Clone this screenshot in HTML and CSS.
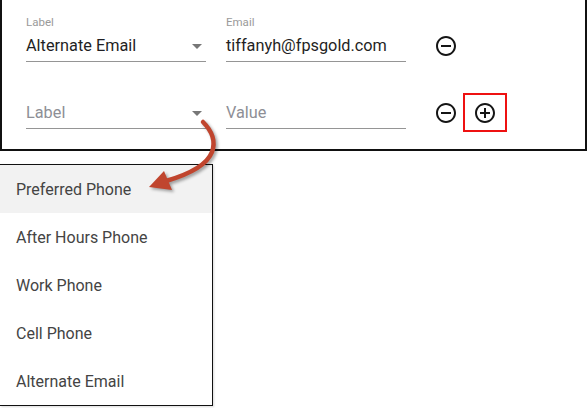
FILE: index.html
```html
<!DOCTYPE html>
<html>
<head>
<meta charset="utf-8">
<link rel="stylesheet" href="styles.css">
</head>
<body>
<div class="panel">
  <div class="row">
    <div class="field select">
      <div class="flabel">Label</div>
      <div class="input"><span class="value">Alternate Email</span><span class="caret"></span></div>
    </div>
    <div class="field">
      <div class="flabel">Email</div>
      <div class="input"><span class="value">tiffanyh@fpsgold.com</span></div>
    </div>
    <div class="actions">
      <span class="icon"><svg viewBox="0 0 24 24" width="24" height="24"><path d="M7 11v2h10v-2H7zm5-9C6.48 2 2 6.480 2 12s4.48 10 10 10 10-4.48 10-10S17.52 2 12 2zm0 18c-4.41 0-8-3.59-8-8s3.59-8 8-8 8 3.59 8 8-3.59 8-8 8z"/></svg></span>
    </div>
  </div>
  <div class="row">
    <div class="field select">
      <div class="flabel"></div>
      <div class="input"><span class="placeholder">Label</span><span class="caret"></span></div>
    </div>
    <div class="field">
      <div class="flabel"></div>
      <div class="input"><span class="placeholder">Value</span></div>
    </div>
    <div class="actions">
      <span class="icon"><svg viewBox="0 0 24 24" width="24" height="24"><path d="M7 11v2h10v-2H7zm5-9C6.48 2 2 6.48 2 12s4.48 10 10 10 10-4.48 10-10S17.52 2 12 2zm0 18c-4.41 0-8-3.59-8-8s3.59-8 8-8 8 3.59 8 8-3.59 8-8 8z"/></svg></span>
      <span class="add-box"><span class="icon"><svg viewBox="0 0 24 24" width="24" height="24"><path d="M13 7h-2v4H7v2h4v4h2v-4h4v-2h-4V7zm-1-5C6.48 2 2 6.48 2 12s4.48 10 10 10 10-4.48 10-10S17.52 2 12 2zm0 18c-4.41 0-8-3.59-8-8s3.59-8 8-8 8 3.59 8 8-3.59 8-8 8z"/></svg></span></span>
    </div>
  </div>
</div>
<ul class="menu">
  <li class="item active">Preferred Phone</li>
  <li class="item">After Hours Phone</li>
  <li class="item">Work Phone</li>
  <li class="item">Cell Phone</li>
  <li class="item">Alternate Email</li>
</ul>
<svg class="pointer" width="587" height="408" viewBox="0 0 587 408">
  <path d="M203 122 C212 131 216 141 212 152 C207 165 190 174 166 181" fill="none" stroke="#c0452e" stroke-width="4.5" stroke-linecap="round"/>
  <polygon points="149,187 164,171 172,190" fill="#c0452e"/>
</svg>
</body>
</html>
```
FILE: styles.css
```css
* { box-sizing: border-box; }
html, body { margin: 0; padding: 0; background: #fff; }
body {
  font-family: Roboto, "Liberation Sans", sans-serif;
  width: 587px;
  height: 408px;
  position: relative;
  overflow: hidden;
}
.panel {
  width: 587px;
  border-left: 2px solid #111;
  border-right: 2px solid #111;
  border-bottom: 2px solid #111;
  padding: 0 0 20px 24px;
}
.row {
  display: flex;
  align-items: flex-start;
  height: 62px;
}
.row + .row { margin-top: 5px; }
.field {
  width: 180px;
  padding-top: 15px;
}
.field + .field { margin-left: 20px; }
.flabel {
  height: 14px;
  line-height: 14px;
  font-size: 11.5px;
  color: #9a9a9a;
}
.input {
  margin-top: 4px;
  height: 29px;
  line-height: 24px;
  font-size: 16.3px;
  padding-top: 1px;
  padding-bottom: 3px;
  border-bottom: 1px solid #959595;
  display: flex;
  align-items: center;
  justify-content: space-between;
}
.value { color: #1f1f24; }
.placeholder { color: #8e8f96; }
.caret {
  width: 0;
  height: 0;
  border-left: 5px solid transparent;
  border-right: 5px solid transparent;
  border-top: 5px solid #777;
  margin-right: 4px;
  margin-top: 1px;
}
.actions {
  margin-left: 28px;
  margin-top: 26px;
  height: 39px;
  display: flex;
  align-items: center;
  gap: 5px;
}
.icon { display: flex; width: 24px; height: 24px; }
.icon svg { fill: #151515; }
.add-box {
  width: 44px;
  height: 39px;
  border: 2px solid #ee1111;
  display: flex;
  align-items: center;
  justify-content: center;
}
.menu {
  list-style: none;
  margin: 13px 0 0 0;
  padding: 0;
  width: 213px;
  border: 1px solid #111;
  border-left: none;
  box-shadow: 1px 1px 2px rgba(0,0,0,0.15);
}
.item {
  height: 48px;
  line-height: 46px;
  padding-top: 2px;
  padding-left: 16px;
  font-size: 16px;
  color: #444;
}
.item.active { background: #f2f2f2; }
.pointer {
  position: absolute;
  left: 0;
  top: 0;
  filter: drop-shadow(2px 2px 1.5px rgba(0,0,0,0.35));
}
```
